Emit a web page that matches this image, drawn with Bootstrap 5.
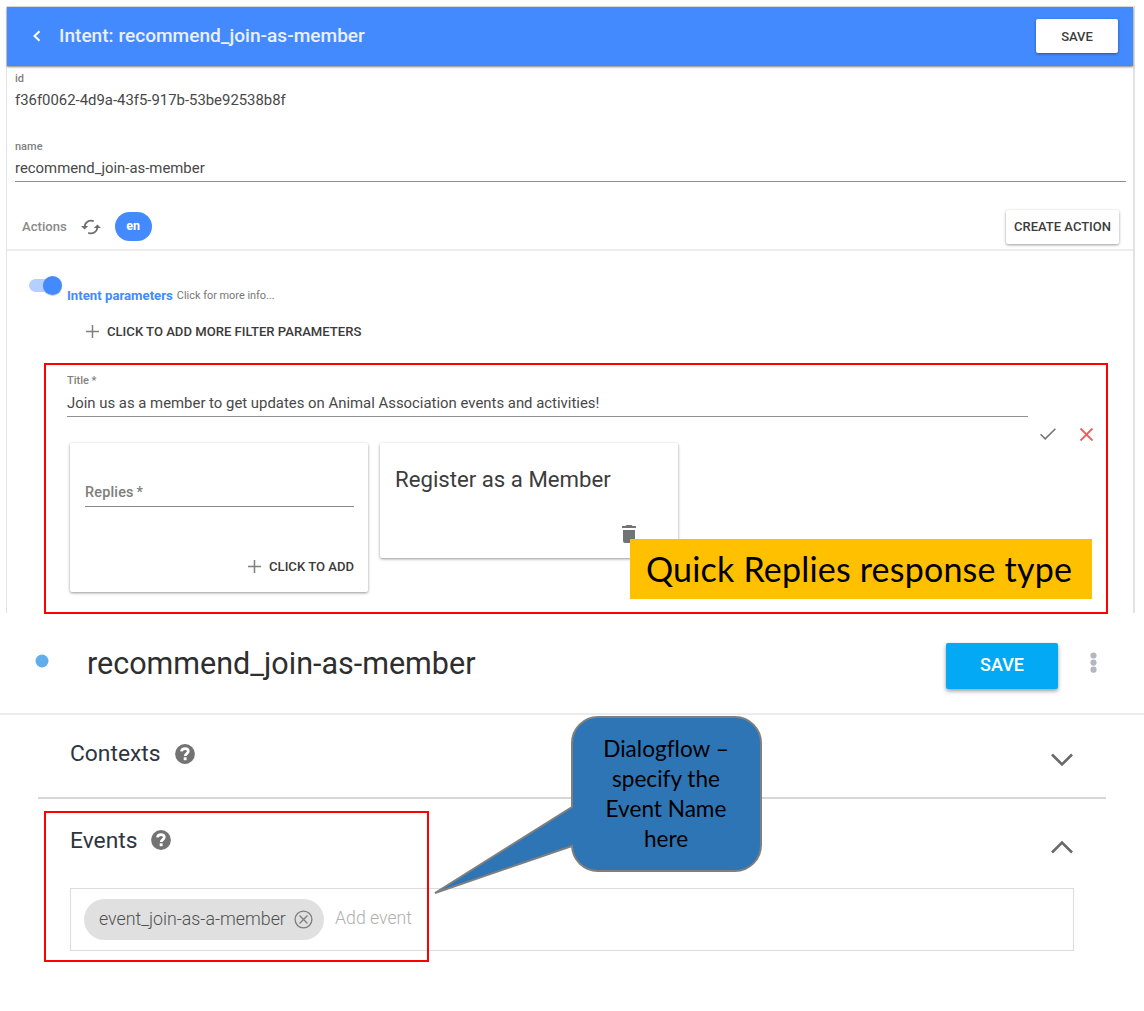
<!DOCTYPE html>
<html lang="en">
<head>
<meta charset="utf-8">
<meta name="viewport" content="width=device-width, initial-scale=1">
<title>Intent: recommend_join-as-member</title>
<link href="https://cdn.jsdelivr.net/npm/bootstrap@5.3.0/dist/css/bootstrap.min.css" rel="stylesheet">
<style>
body{font-family:Roboto,"Liberation Sans",sans-serif;color:#444;background:#fff;overflow:hidden;line-height:1}
svg{display:block;flex:none}
span,div,button{white-space:nowrap}
.stage{width:1144px;height:1011px}
/* intent editor */
.editor{margin:6px 0 0 6px;width:1129px;height:607px;border:solid #e2e2e4;border-width:1px 2px 0 1px}
.topbar{height:59px;background:#448aff;padding:0 15px 2px 25px;box-shadow:0 1px 2px rgba(0,0,0,.5)}
.topbar-title{font-size:19.1px;font-weight:500;color:#e9f1ff;margin-left:17px}
.raised{background:#fff;border:0;border-radius:2px;color:#3c3c3c;font-size:13px;font-weight:500;height:34px;box-shadow:0 1px 3px rgba(0,0,0,.4)}
.save-top{width:82px;margin-top:1px}
.create{width:113px}
.fields{padding:0 7px 0 8px;height:116px}
.lab{font-size:11px;color:#808080;font-weight:500;height:14px;line-height:14px}
.lab-id{margin-top:6px}
.val{font-size:14.9px;color:#484848;height:20px;line-height:20px;margin-top:4px}
.name-field{border-bottom:1px solid #909090;height:42px;margin-top:30px}
.actions{height:69px;padding:22px 14px 0 15px;border-bottom:2px solid #ededed}
.actions-label{font-size:13.1px;font-weight:500;color:#8a8a8a}
.refresh{margin:0 14px 0 14px}
.pill{width:37px;height:29px;border-radius:15px;background:#448aff;color:#fff;font-size:12.5px;font-weight:700}
.params{height:39px;padding-top:23px}
.params-text{margin:14px 0 0 8px;height:16px}
.params-name{font-size:13.2px;font-weight:700;color:#448aff}
.params-more{font-size:10.9px;color:#777;margin-left:4px}
.add-filter{height:83px;padding-left:79px}
.switch-track{width:30px;height:13px;border-radius:7px;background:#b4d0ff;margin:5px 0 0 22px;position:relative}
.switch-knob{position:absolute;left:14px;top:-3px;width:19px;height:19px;border-radius:50%;background:#448aff;box-shadow:0 1px 1px rgba(0,0,0,.2)}
.cap{font-size:13.1px;font-weight:500;color:#3a3a3a;margin-left:8px}
.response{margin:-10px 0 0 37px;width:1064px;height:251px;border:2px solid #f00;position:relative}
.title-field{width:961px;height:52px;margin-left:21px;border-bottom:1px solid #909090;padding-top:9px}
.title-field .val{margin-top:5px}
.tile{width:298px;border-radius:2px;box-shadow:0 1px 3px rgba(0,0,0,.42);background:#fff;margin-top:26px}
.tile-new{height:149px;padding:39px 14px 0 15px}
.tile-reply{height:115px;margin-left:12px;padding:24px 0 0 15px}
.replies{height:25px;border-bottom:1px solid #888;font-size:14.4px;font-weight:500;color:#7d7d7d;line-height:22px;letter-spacing:.2px;word-spacing:-1px}
.tile-add{margin-top:53px}
.reply-name{font-size:22.2px;line-height:24px;color:#3c3c3c}
.trash{margin:34px 0 0 227px}
.verdict{padding:11px 0 0 362px}
.banner{position:absolute;left:584px;top:174px;width:462px;height:60px;padding-right:4px;background:#ffc000;color:#000;font-family:Lato,sans-serif;font-size:34px;letter-spacing:.2px}
/* dialogflow */
.flow{position:relative;height:398px}
.flow-head{height:102px;border-bottom:2px solid #ececec;padding-left:35px}
.dot{margin-top:-5px}
.flow-title{font-size:30.5px;color:#2e2e2e;margin:2px 0 0 38px}
.flow-save{width:112px;height:46px;border:0;border-radius:2px;background:#03a9f4;color:#fff;font-size:18px;font-weight:500;margin-top:5px;padding-bottom:2px;box-shadow:0 2px 4px rgba(0,0,0,.4)}
.kebab{margin:-1px 47px 0 32px}
.sec{font-size:22.8px;color:#30343f}
.help{margin:-2px 0 0 14px}
.chev{margin-top:11px}
.contexts{margin:0 38px;height:84px;border-bottom:2px solid #d9d4d6;padding:0 33px 3px 32px}
.events{height:89px;padding:0 71px 5px 70px}
.events-box{margin-left:70px;width:1004px;height:63px;border:1px solid #dcdcdc;padding-left:13px}
.chip{width:240px;height:41px;border-radius:21px;background:#e0e0e0;color:#505050;font-size:17.8px;padding:0 11px 2px 15px}
.chip svg{margin-top:2px}
.add-event{font-size:17.7px;color:#b0b0b0;margin:-1px 0 0 11px}
.frame{position:absolute;left:44px;top:198px;width:385px;height:151px;border:2px solid #f00}
.callout{position:absolute;left:430px;top:99px}
.callout-text{position:absolute;left:571px;top:121px;width:190px;text-align:center;font-family:Lato,sans-serif;font-size:22.6px;line-height:30px;color:#000;font-variant-ligatures:none}
</style>
</head>
<body>
<main class="stage">
<section class="editor">
  <header class="topbar d-flex align-items-center">
    <svg width="10" height="12" viewBox="0 0 10 12"><path d="M7.500 1.200 2.500 6l5 4.800" fill="none" stroke="#fff" stroke-width="2"/></svg>
    <span class="topbar-title">Intent: recommend_join-as-member</span>
    <button class="raised save-top ms-auto">SAVE</button>
  </header>
  <div class="fields d-flex flex-column">
    <div class="lab lab-id">id</div>
    <div class="val">f36f0062-4d9a-43f5-917b-53be92538b8f</div>
    <div class="name-field">
      <div class="lab">name</div>
      <div class="val">recommend_join-as-member</div>
    </div>
  </div>
  <div class="actions d-flex align-items-center">
    <span class="actions-label">Actions</span>
    <svg class="refresh" width="20" height="16" viewBox="0 0 20 16" fill="none" stroke="#6e6e6e" stroke-width="1.700"><path d="M3.700 8.500A6.300 6.300 0 0 1 12.800 2.300M16.300 7.500A6.300 6.300 0 0 1 7.200 13.700"/><path d="M0 7 3.600 10.500 7.200 7ZM12.800 9 16.400 5.500 20 9Z" fill="#6e6e6e" stroke="none"/></svg>
    <span class="pill d-flex align-items-center justify-content-center">en</span>
    <button class="raised create ms-auto p-0">CREATE ACTION</button>
  </div>
  <div class="params d-flex">
    <div class="switch-track"><div class="switch-knob"></div></div>
    <div class="params-text d-flex align-items-center">
      <span class="params-name">Intent parameters</span>
      <span class="params-more">Click for more info...</span>
    </div>
  </div>
  <div class="add-filter d-flex align-items-center">
    <svg width="13" height="13" viewBox="0 0 13 13"><path d="M6.500 0V13M0 6.500H13" stroke="#808080" stroke-width="1.500"/></svg>
    <span class="cap">CLICK TO ADD MORE FILTER PARAMETERS</span>
  </div>
  <div class="response">
    <div class="title-field">
      <div class="lab">Title *</div>
      <div class="val">Join us as a member to get updates on Animal Association events and activities!</div>
    </div>
    <div class="d-flex ps-4">
      <div class="tile tile-new">
        <div class="replies">Replies *</div>
        <div class="tile-add d-flex align-items-center justify-content-end">
          <svg width="13" height="13" viewBox="0 0 13 13"><path d="M6.500 0V13M0 6.500H13" stroke="#808080" stroke-width="1.500"/></svg>
          <span class="cap">CLICK TO ADD</span>
        </div>
      </div>
      <div class="tile tile-reply">
        <div class="reply-name">Register as a Member</div>
        <svg class="trash" width="14" height="18" viewBox="0 0 14 18" fill="#737373"><path d="M1 5H13V16a2 2 0 0 1-2 2H3a2 2 0 0 1-2-2ZM0 1H3.500L4.500 0H9.500L10.500 1H14V3H0Z"/></svg>
      </div>
      <div class="verdict d-flex">
        <svg width="16" height="12" viewBox="0 0 16 12"><path d="M.6 6.200 5.200 10.800 15.400 .8" fill="none" stroke="#757575" stroke-width="1.600"/></svg>
        <svg class="ms-4" width="13" height="13" viewBox="0 0 13 13"><path d="M.5.500 12.500 12.500M12.500.500.500 12.500" stroke="#ff5252" stroke-width="1.900"/></svg>
      </div>
    </div>
    <div class="banner d-flex align-items-center justify-content-center">Quick Replies response type</div>
  </div>
</section>
<section class="flow">
  <div class="flow-head d-flex align-items-center">
    <svg class="dot" width="14" height="14"><circle cx="7" cy="7" r="6.500" fill="#62aeec"/></svg>
    <span class="flow-title">recommend_join-as-member</span>
    <button class="flow-save ms-auto">SAVE</button>
    <svg class="kebab" width="7" height="21" viewBox="0 0 7 21" fill="#b3b8c0"><circle cx="3.500" cy="3.500" r="3.100"/><circle cx="3.500" cy="10.600" r="3.100"/><circle cx="3.500" cy="17.700" r="3.100"/></svg>
  </div>
  <div class="contexts d-flex align-items-center">
    <span class="sec">Contexts</span>
    <svg class="help" width="20" height="20" viewBox="0 0 20 20"><circle cx="10" cy="10" r="9.900" fill="#737373"/><path d="M6.400 7.400C6.700 5.400 8.200 4.600 10 4.600c1.900 0 3.300 1 3.300 2.700 0 2.400-3.100 2.200-3.100 4.700" fill="none" stroke="#fff" stroke-width="2.700"/><rect x="8.700" y="13.300" width="2.900" height="2.900" fill="#fff"/></svg>
    <svg class="chev ms-auto" width="22" height="14" viewBox="0 0 22 14"><path d="M1 1.500 11 11.500 21 1.500" fill="none" stroke="#6a6a6a" stroke-width="2.600"/></svg>
  </div>
  <div class="events d-flex align-items-center">
    <span class="sec">Events</span>
    <svg class="help" width="20" height="20" viewBox="0 0 20 20"><circle cx="10" cy="10" r="9.900" fill="#737373"/><path d="M6.400 7.400C6.700 5.400 8.200 4.600 10 4.600c1.900 0 3.300 1 3.300 2.700 0 2.400-3.100 2.200-3.100 4.700" fill="none" stroke="#fff" stroke-width="2.700"/><rect x="8.700" y="13.300" width="2.900" height="2.900" fill="#fff"/></svg>
    <svg class="chev ms-auto" width="22" height="14" viewBox="0 0 22 14"><path d="M1 12.500 11 2.500 21 12.500" fill="none" stroke="#6a6a6a" stroke-width="2.600"/></svg>
  </div>
  <div class="events-box d-flex align-items-center">
    <span class="chip d-flex align-items-center justify-content-between fw-light">event_join-as-a-member
      <svg width="19" height="19" viewBox="0 0 19 19" fill="none" stroke="#7d7d7d" stroke-width="1.300"><circle cx="9.500" cy="9.500" r="8.400"/><path d="M5.500 5.500 13.500 13.500M13.500 5.500 5.500 13.500"/></svg>
    </span>
    <span class="add-event fw-light">Add event</span>
  </div>
  <div class="frame"></div>
  <svg class="callout" width="336" height="190" viewBox="0 0 336 190"><path d="M168 5H305A26 26 0 0 1 331 31V133A26 26 0 0 1 305 159H168A26 26 0 0 1 142 134L5 181 142 95V31A26 26 0 0 1 168 5Z" fill="#2e75b6" stroke="#7f7f7f" stroke-width="2"/></svg>
  <div class="callout-text">Dialogflow –<br>specify the<br>Event Name<br>here</div>
</section>
</main>
<script src="https://cdn.jsdelivr.net/npm/bootstrap@5.3.0/dist/js/bootstrap.bundle.min.js"></script>
</body>
</html>
